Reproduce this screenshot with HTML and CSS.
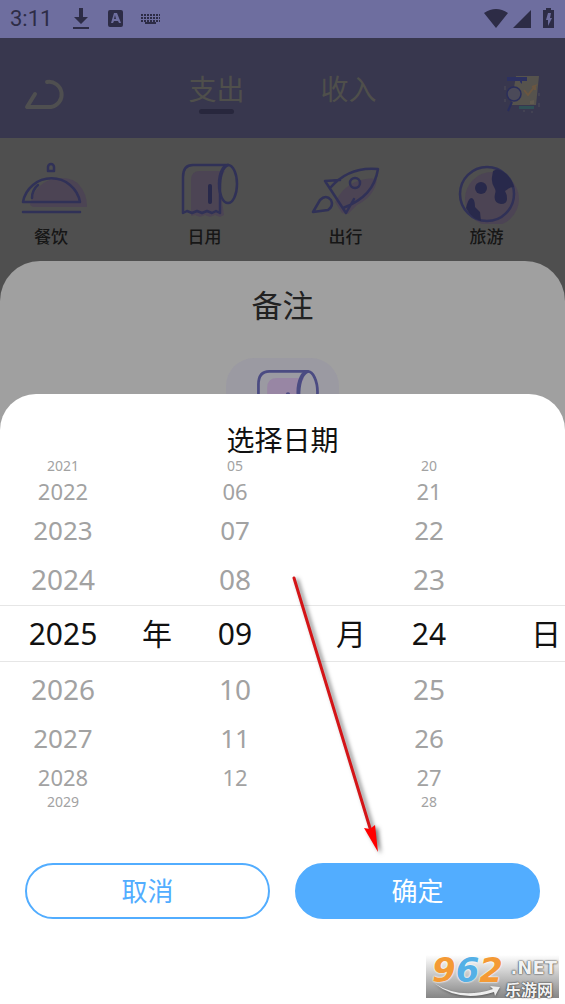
FILE: index.html
```html
<!DOCTYPE html>
<html lang="zh-CN">
<head>
<meta charset="utf-8">
<meta name="viewport" content="width=device-width, initial-scale=1">
<title>选择日期</title>
<link rel="stylesheet" href="styles.css">
</head>
<body>
<svg class="sprite" aria-hidden="true">
  <symbol id="roll" viewBox="0 0 72 64">
    <path class="tint" d="M22 20q0-9 9-9h25q-5 7-5 17l4 27-4 2-5-2-5 2-5-2-5 2-5-2-4 1z"/>
    <path class="line" d="M59 5H24Q14 5 14 17V53l4-2 5 2 5-2 5 2 5-2 5 2 4-2 4 2V28Q51 9 59 5"/>
    <ellipse class="line" cx="59" cy="24" rx="9" ry="19"/>
    <path class="slot" d="M41 26V42"/>
  </symbol>
</svg>
<div class="screen">
  <div class="status">
    <span class="clock">3:11</span>
    <svg class="status-left" viewBox="0 0 90 22" aria-hidden="true">
      <path d="M7 0h4v9h5l-7 7-7-7h5zM1 19h16v2H1z"/>
      <path fill-rule="evenodd" d="M38 2h11q2 0 2 2v13q0 2-2 2H38q-2 0-2-2V4q0-2 2-2zm4 3-3 10h2l1-2h4l1 2h2L45 5zm1 2 1 4h-2z"/>
      <path class="keys" d="M69 7h19M69 10h19M69 13h19"/>
      <path d="M73 14h11v2H73z"/>
    </svg>
    <svg class="status-right" viewBox="0 0 72 22" aria-hidden="true">
      <path d="M1 5Q13-3 25 5L13 20zM48 2v18H30z"/>
      <path fill-rule="evenodd" d="M60 2h3V0h5v2h3v18H60zm5 3-2 7h2v6l4-8h-2l1-5z"/>
    </svg>
  </div>
  <header class="topbar">
    <button class="icon-button" type="button" aria-label="返回">
      <svg class="back" viewBox="0 0 42 32"><path d="M12 16 4 29h24a12 12 0 0 0-4-25"/></svg>
    </button>
    <nav class="tabs">
      <a class="tab active" href="#expense">支出</a>
      <a class="tab" href="#income">收入</a>
    </nav>
    <button class="icon-button" type="button" aria-label="账单报表">
      <svg class="report" viewBox="0 0 38 40">
        <path fill="#56534d" d="M12 2h23l-3 29H7z"/>
        <path fill="#2d3160" d="M3 3h20v4h-5v3l-2-2V7H3z"/>
        <path fill="none" stroke="#6b5640" stroke-width="2" d="m20 16 4 5 7-9-3 1m3-1v4"/>
        <path fill="#625b50" d="m26 27 4-1v4h-4z"/>
        <path fill="#305055" d="M15 32h15v3H15z"/>
        <circle cx="10" cy="20" r="7" fill="#4b4a59" stroke="#2a2e5b" stroke-width="1.500"/>
        <path fill="none" stroke="#2a2e5b" stroke-width="2" d="m8 28-4 9"/>
        <path fill="none" stroke="#4f4f59" d="M1 12v4m0 9v3m34-9v3m0 7v4M20 36v2m8-1v2"/>
      </svg>
    </button>
  </header>
  <main class="page">
    <ul class="categories">
      <li class="category">
        <svg class="category-icon" viewBox="0 0 72 64" aria-hidden="true">
          <path class="tint" d="M15 45Q20 21 43 18q16-1 22 8 7 8 7 21H18z"/>
          <path class="line" d="M8 42a29 29 0 0 1 57 0zM8 52h57M17 38q0-8 6-13"/>
          <path class="line" d="M33 11V7a3 3 0 0 1 6 0v4z"/>
        </svg>
        <span>餐饮</span>
      </li>
      <li class="category">
        <svg class="category-icon" aria-hidden="true"><use href="#roll"/></svg>
        <span>日用</span>
      </li>
      <li class="category">
        <svg class="category-icon" viewBox="0 0 72 64" aria-hidden="true">
          <path class="tint" d="M25 42q8-15 20-20 12-5 22-3-2 17-20 26l-9 9-6-1z"/>
          <path class="line" d="M20 28C33 13 48 7 68 9 65 28 54 40 33 48M15 21l21 32 8-14M15 21l15-1M3 52l7-12q6-6 11 0 3 6-3 10z"/>
          <circle class="line" cx="45" cy="23" r="5"/>
        </svg>
        <span>出行</span>
      </li>
      <li class="category">
        <svg class="category-icon" viewBox="0 0 72 64" aria-hidden="true">
          <circle class="tint" cx="41" cy="39" r="27"/>
          <circle class="line" cx="36" cy="34" r="27"/>
          <circle class="solid" cx="30" cy="28" r="6"/>
          <path class="solid" d="M42 11q4-3 9 0 9 5 12 16-4 0-6 2l-3 2q2 3 2 8 0 5-6 5-8-1-6-10 1-3 0-5-4-6-3-12zM15 48q2-9 5-10 4 0 4 9l5 5 1 9q-9-2-15-13z"/>
        </svg>
        <span>旅游</span>
      </li>
    </ul>
    <section class="note-sheet">
      <h2 class="note-title">备注</h2>
      <div class="chip"><svg class="chip-icon" aria-hidden="true"><use href="#roll"/></svg></div>
      <section class="date-sheet" role="dialog" aria-labelledby="date-title">
        <h1 class="date-title" id="date-title">选择日期</h1>
        <div class="picker">
          <ul class="wheel year" role="listbox" aria-label="年">
            <li class="edge" role="option">2021</li>
            <li class="far" role="option">2022</li>
            <li class="mid" role="option">2023</li>
            <li class="near" role="option">2024</li>
            <li class="selected" role="option" aria-selected="true">2025</li>
            <li class="near" role="option">2026</li>
            <li class="mid" role="option">2027</li>
            <li class="far" role="option">2028</li>
            <li class="edge" role="option">2029</li>
          </ul>
          <span class="unit unit-year">年</span>
          <ul class="wheel month" role="listbox" aria-label="月">
            <li class="edge" role="option">05</li>
            <li class="far" role="option">06</li>
            <li class="mid" role="option">07</li>
            <li class="near" role="option">08</li>
            <li class="selected" role="option" aria-selected="true">09</li>
            <li class="near" role="option">10</li>
            <li class="mid" role="option">11</li>
            <li class="far" role="option">12</li>
            <li class="edge" role="presentation"></li>
          </ul>
          <span class="unit unit-month">月</span>
          <ul class="wheel day" role="listbox" aria-label="日">
            <li class="edge" role="option">20</li>
            <li class="far" role="option">21</li>
            <li class="mid" role="option">22</li>
            <li class="near" role="option">23</li>
            <li class="selected" role="option" aria-selected="true">24</li>
            <li class="near" role="option">25</li>
            <li class="mid" role="option">26</li>
            <li class="far" role="option">27</li>
            <li class="edge" role="option">28</li>
          </ul>
          <span class="unit unit-day">日</span>
        </div>
        <div class="actions">
          <button class="action cancel" type="button">取消</button>
          <button class="action confirm" type="button">确定</button>
        </div>
      </section>
    </section>
  </main>
  <svg class="pointer" viewBox="0 0 100 290" aria-hidden="true">
    <path d="M4 8 80 258" fill="none" stroke="#d41518" stroke-width="3" stroke-linecap="round"/>
    <path d="m74 258 6 1 5-4 3 27z" fill="#f00"/>
  </svg>
  <div class="watermark">
    <svg class="swoosh" viewBox="0 0 133 43" aria-hidden="true"><path d="M8 28q26 17 59 6l-3-3 10 1-5 9-1-4Q33 48 8 28z"/></svg>
    <span class="mark-number">9<b>6</b>2</span>
    <span class="mark-side"><span class="mark-net">.NET</span><span class="mark-name">乐游网</span></span>
  </div>
</div>
</body>
</html>
```
FILE: styles.css
```css
* {
  box-sizing: border-box;
}

body {
  margin: 0;
  background: #fff;
  font-family: "Noto Sans", "Noto Sans CJK SC", sans-serif;
}

ul,
h1,
h2 {
  margin: 0;
  padding: 0;
  list-style: none;
  font-weight: 400;
}

button {
  font: inherit;
  cursor: pointer;
}

.sprite {
  display: none;
}

.screen {
  position: relative;
  display: flex;
  flex-direction: column;
  min-height: 100vh;
}

/* Status bar */
.status {
  display: flex;
  align-items: center;
  height: 38px;
  padding: 0 10px;
  background: #6e6e9f;
  color: #2d2c46;
  fill: #2d2c46;
}

.clock {
  font: 22px/38px Roboto, sans-serif;
}

.status-left {
  width: 90px;
  height: 22px;
  margin-left: 20px;
}

.keys {
  stroke: #2d2c46;
  stroke-width: 2;
  stroke-dasharray: 2 1;
}

.status-right {
  width: 72px;
  height: 22px;
  margin-left: auto;
}

/* Top bar */
.topbar {
  display: flex;
  align-items: center;
  justify-content: space-between;
  height: 100px;
  padding: 0 23px;
  background: #38374e;
}

.icon-button {
  display: flex;
  justify-content: flex-end;
  width: 42px;
  padding: 12px 0 0;
  border: 0;
  background: none;
}

.back {
  width: 42px;
  height: 32px;
  fill: none;
  stroke: #4f4f50;
  stroke-width: 4;
  stroke-linecap: round;
  stroke-linejoin: round;
}

.report {
  width: 38px;
  height: 40px;
}

.tabs {
  display: flex;
  gap: 76px;
}

.tab {
  padding-top: 9px;
  color: #4f4f4b;
  font-size: 28px;
  line-height: 36px;
  text-decoration: none;
}

.tab::after {
  content: "";
  display: block;
  width: 35px;
  height: 5px;
  margin: 2px auto 0;
  border-radius: 3px;
}

.active::after {
  background: #28273d;
}

/* Category grid */
.page {
  display: flex;
  flex: 1;
  flex-direction: column;
  background: #4f4f4f;
}

.categories {
  display: grid;
  grid-template-columns: 134fr 141fr 141fr 141fr 8fr;
  padding: 22px 0 11px;
}

.category {
  display: flex;
  flex-direction: column;
  align-items: center;
  color: #161616;
  font-size: 17px;
  font-weight: 500;
  line-height: 26px;
}

.category:first-child {
  padding-right: 32px;
}

.category-icon {
  --line: #303157;
  --solid: #28294b;
  --tint: #4c4454;
  width: 72px;
  height: 64px;
}

.tint {
  fill: var(--tint);
}

.solid {
  fill: var(--solid);
}

.line {
  fill: none;
  stroke: var(--line);
  stroke-width: 2.5;
  stroke-linecap: round;
  stroke-linejoin: round;
}

.slot {
  stroke: var(--solid);
  stroke-width: 4;
  stroke-linecap: round;
}

/* Note sheet */
.note-sheet {
  display: flex;
  flex: 1;
  flex-direction: column;
  border-radius: 40px 40px 0 0;
  background: #a0a0a0;
}

.note-title {
  padding: 20px 0 29px;
  color: #222;
  font-size: 31px;
  line-height: 48px;
  text-align: center;
}

.chip {
  align-self: center;
  width: 113px;
  height: 72px;
  padding-top: 8px;
  border-radius: 28px;
  background: #9b9aa2;
  text-align: center;
}

.chip-icon {
  --line: #4b4b82;
  --solid: #4b4b82;
  --tint: #9886a4;
  width: 79px;
  height: 70px;
}

/* Date sheet */
.date-sheet {
  position: relative;
  flex: 1;
  margin-top: -36px;
  border-radius: 36px 36px 0 0;
  background: #fff;
}

.date-title {
  padding-top: 24px;
  color: #111;
  font-size: 28px;
  line-height: 44px;
  text-align: center;
}

.picker {
  display: grid;
  grid-template-columns: 126fr 62fr 94fr 38fr 62fr 94fr 38fr 51fr;
  align-content: center;
  align-items: center;
  height: 344px;
  background: linear-gradient(#e6e6e6, #e6e6e6) 0 143px / 100% 1px no-repeat,
    linear-gradient(#e6e6e6, #e6e6e6) 0 199px / 100% 1px no-repeat;
}

.wheel {
  display: flex;
  flex-direction: column;
  color: #a2a2a2;
  text-align: center;
}

.month {
  grid-column: 3;
}

.day {
  grid-column: 6;
}

.selected,
.unit {
  color: #111;
  font-size: 30px;
  line-height: 56px;
  text-align: center;
}

.unit-month {
  grid-column: 5;
}

.unit-day {
  grid-column: 8;
  padding-right: 4px;
  text-align: right;
}

.near {
  font-size: 28px;
  line-height: 54px;
}

.mid {
  font-size: 26px;
  line-height: 44px;
}

.far {
  font-size: 22px;
  line-height: 34px;
}

.edge {
  height: 16px;
  font-size: 14px;
  line-height: 16px;
}

.actions {
  display: grid;
  grid-template-columns: 1fr 1fr;
  gap: 25px;
  padding: 57px 25px 80px;
}

.action {
  height: 56px;
  padding: 0;
  border: 2px solid #52adff;
  border-radius: 28px;
  font-size: 26px;
  line-height: 52px;
}

.cancel {
  background: #fff;
  color: #52adff;
}

.confirm {
  background: #52adff;
  color: #fff;
}

/* Overlays */
.pointer {
  position: absolute;
  top: 570px;
  left: 290px;
  width: 100px;
  height: 290px;
  filter: drop-shadow(3px 2px 2px #0008);
  pointer-events: none;
}

.watermark {
  position: absolute;
  right: 6px;
  bottom: 6px;
  display: flex;
  width: 133px;
  height: 43px;
  padding-left: 6px;
  background: linear-gradient(#fff, #858585);
}

.swoosh {
  position: absolute;
  inset: 0;
  fill: #eee;
  filter: drop-shadow(0 1px 1px #555);
}

.mark-number {
  color: #f49a35;
  font: italic 700 34px/30px "DejaVu Sans", sans-serif;
  text-shadow: 0 0 2px #fff, 0 0 2px #fff;
}

.mark-number b {
  color: #55b0e6;
}

.mark-side {
  position: absolute;
  top: 4px;
  right: 2px;
  display: flex;
  flex-direction: column;
  gap: 4px;
  color: #f2f2f2;
  text-align: right;
  text-shadow: 0 0 1px #333, 0 0 2px #333;
}

.mark-net {
  font: 700 18px/18px "DejaVu Sans", sans-serif;
}

.mark-name {
  padding-right: 4px;
  font-size: 16px;
  font-weight: 700;
  line-height: 18px;
}
```
